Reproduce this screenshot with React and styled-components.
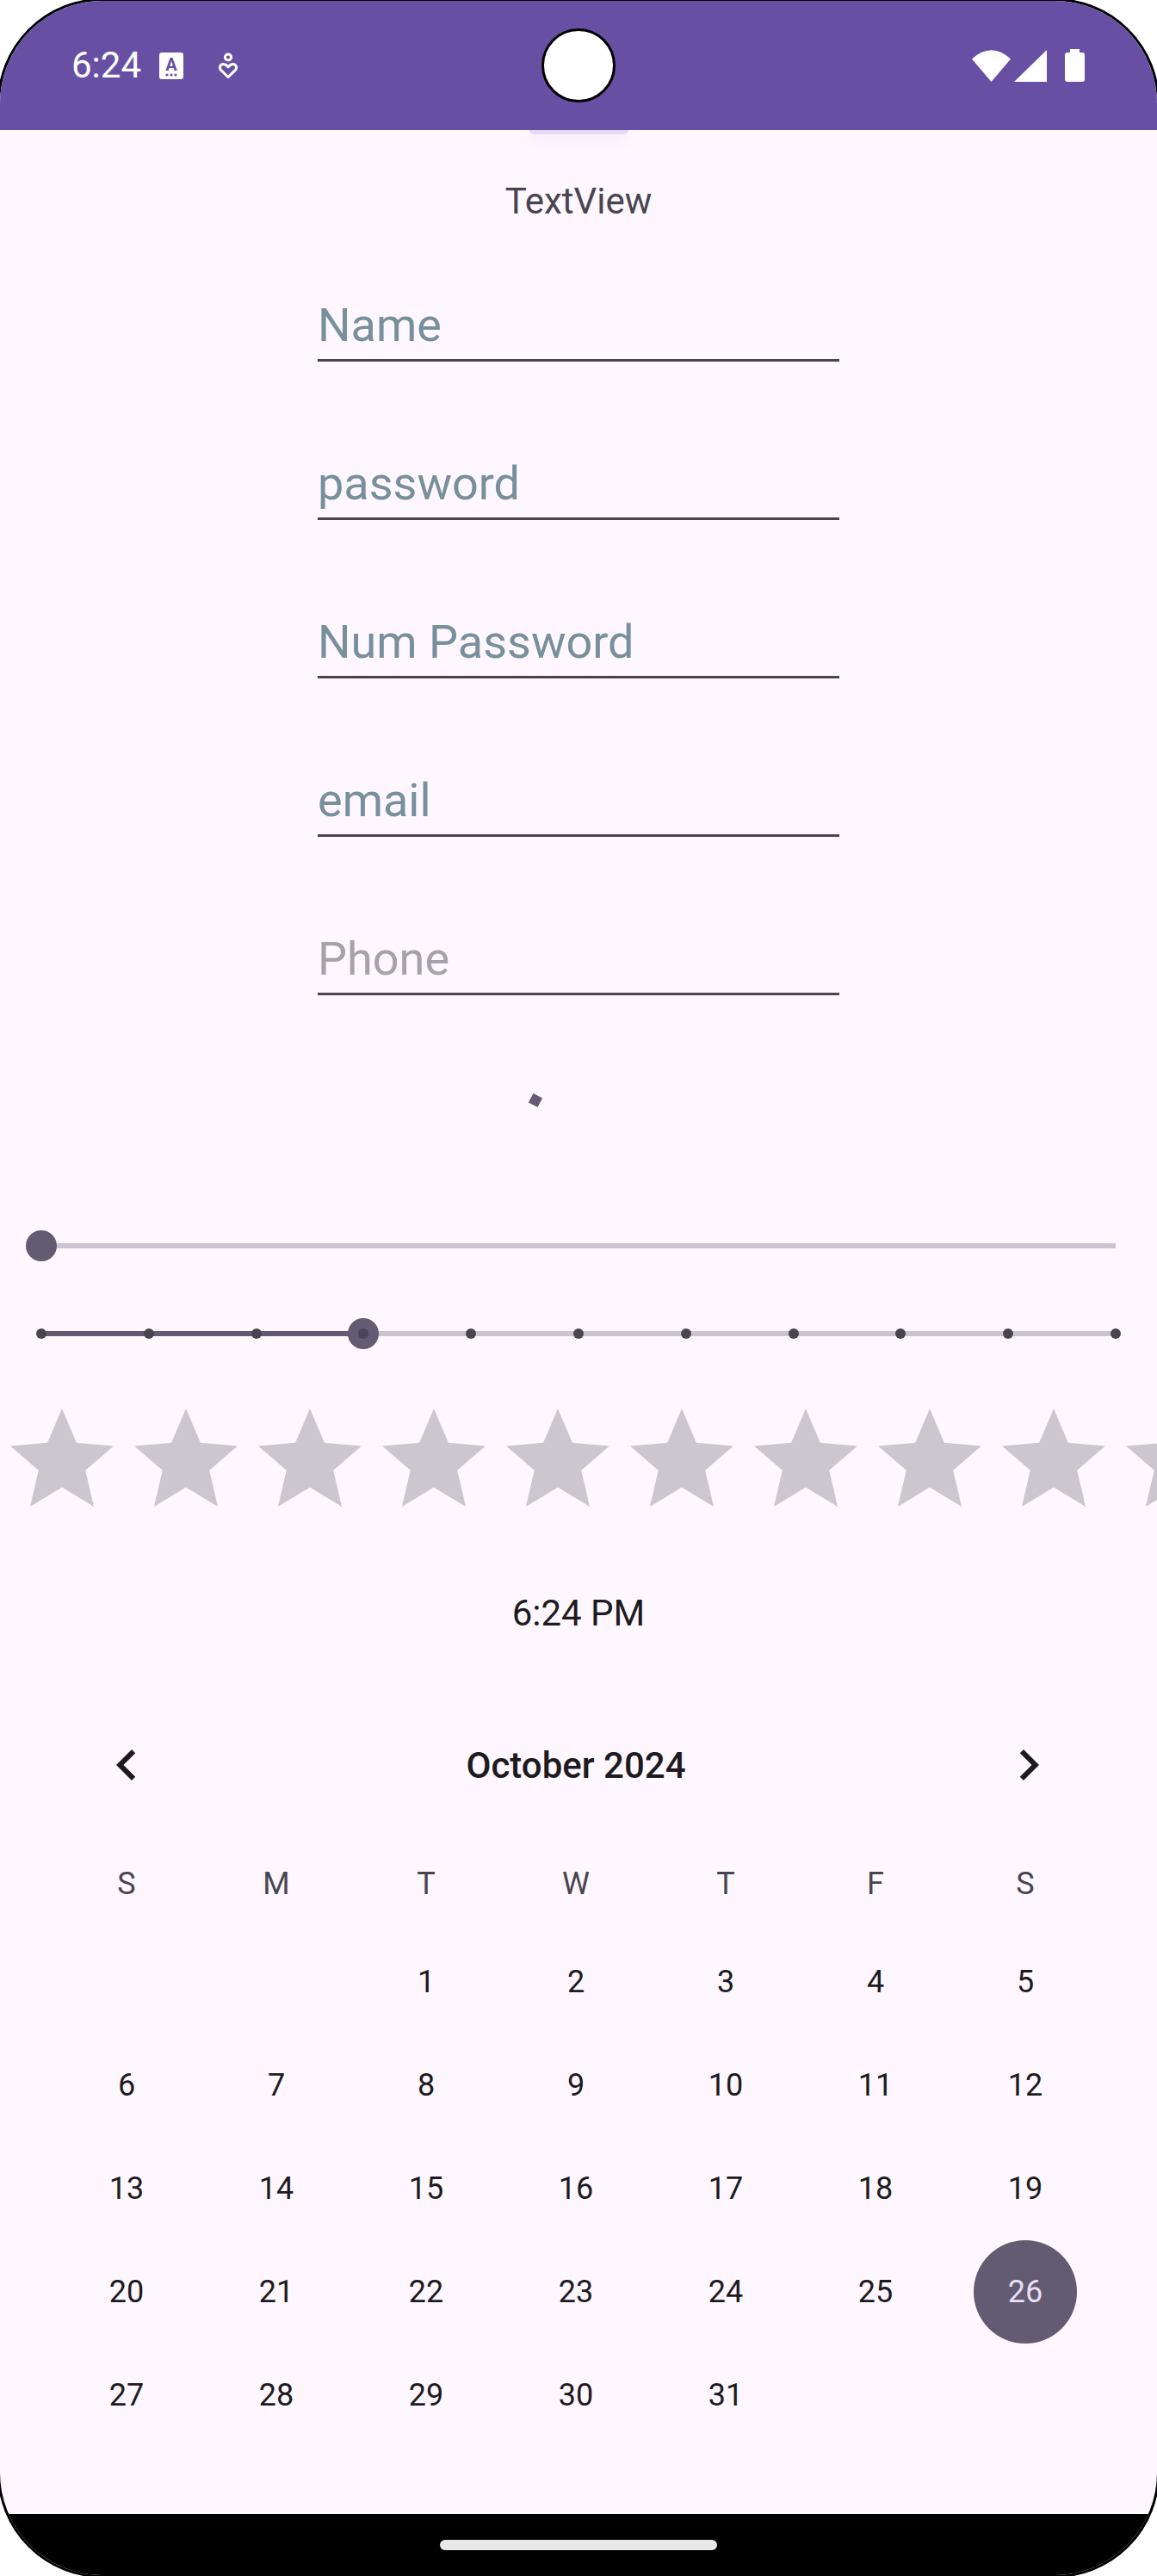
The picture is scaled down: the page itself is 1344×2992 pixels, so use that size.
import React from "react";
import styled, { createGlobalStyle } from "styled-components";

const GlobalStyle = createGlobalStyle`
  html, body {
    margin: 0;
    padding: 0;
    background: #fff;
  }
  body {
    font-family: Roboto, "Noto Sans", "Liberation Sans", sans-serif;
  }
  * {
    box-sizing: border-box;
  }
`;

const PageSt = styled.div`
  width: 1344px;
  height: 2992px;
  overflow: hidden;
  background: #fff;
`;

const ScreenSt = styled.div`
  margin: -2px -3px;
  width: 1350px;
  height: 2996px;
  border: 3px solid #000;
  border-radius: 122px;
  overflow: hidden;
  background: #fef7ff;
  display: flex;
  flex-direction: column;
`;

const StatusBarSt = styled.div`
  flex-shrink: 0;
  height: 150px;
  background: #6750a4;
  display: grid;
  grid-template-columns: 1fr auto 1fr;
  align-items: center;
  padding: 0 84px 0 83px;
  color: #fff;
`;

const StatusLeftSt = styled.div`
  display: flex;
  align-items: center;
`;

const ClockSt = styled.span`
  font-size: 42px;
  line-height: 42px;
  margin-right: 21px;
`;

const StatusRightSt = styled.div`
  justify-self: end;
  display: flex;
  align-items: center;
`;

const CameraSt = styled.div`
  width: 86px;
  height: 86px;
  border-radius: 50%;
  background: #fff;
  border: 3px solid #000;
`;

const TabHintSt = styled.div`
  flex-shrink: 0;
  width: 115px;
  height: 5px;
  margin: 0 auto;
  background: #e4d9f9;
  border-radius: 0 0 14px 14px;
  box-shadow: 0 6px 14px rgba(70, 50, 90, 0.09);
`;

const BodySt = styled.main`
  flex: 1;
  display: flex;
  flex-direction: column;
`;

const TextViewSt = styled.div`
  margin-top: ${(p) => p.$top}px;
  font-size: 42px;
  line-height: 49px;
  text-align: center;
  color: ${(p) => p.$color || "#49454f"};
`;

const FieldsSt = styled.div`
  margin-top: 88px;
  display: flex;
  flex-direction: column;
  align-items: center;
  gap: 110px;
`;

const FieldSt = styled.div`
  width: 606px;
  padding-bottom: 8px;
  border-bottom: 3px solid #49454f;
  font-size: 54px;
  line-height: 63px;
  color: ${(p) => p.$hint};
`;

const ProgressSt = styled.svg`
  display: block;
  margin: 50px auto 0;
`;

const SliderSt = styled.div`
  position: relative;
  height: 48px;
  margin: ${(p) => p.$top}px 48px 0;
  display: flex;
  align-items: center;
`;

const TrackSt = styled.div`
  position: relative;
  flex: 1;
  height: 6px;
  background: #cac4d0;
`;

const ActiveTrackSt = styled.div`
  position: absolute;
  left: 0;
  top: 0;
  bottom: 0;
  width: ${(p) => p.$pct}%;
  background: #625b71;
`;

const TicksSt = styled.div`
  position: absolute;
  left: -6px;
  right: -6px;
  top: 50%;
  transform: translateY(-50%);
  display: flex;
  justify-content: space-between;
`;

const TickSt = styled.span`
  width: 12px;
  height: 12px;
  border-radius: 50%;
  background: #49454f;
`;

const ThumbSt = styled.div`
  position: absolute;
  left: ${(p) => p.$pct}%;
  top: 50%;
  width: 36px;
  height: 36px;
  margin: -18px 0 0 -18px;
  border-radius: 50%;
  background: #625b71;
  display: flex;
  align-items: center;
  justify-content: center;
`;

const ThumbDotSt = styled.span`
  width: 12px;
  height: 12px;
  border-radius: 50%;
  background: #4a4458;
`;

const StarsSt = styled.div`
  margin-top: 51px;
  display: flex;
  overflow: hidden;
`;

const StarSt = styled.svg`
  flex-shrink: 0;
  display: block;
`;

const CalendarSt = styled.section`
  margin-top: 116px;
  padding: 0 60px;
`;

const CalHeaderSt = styled.div`
  display: grid;
  grid-template-columns: repeat(7, 174px);
  height: 72px;
  align-items: center;
`;

const NavButtonSt = styled.button`
  justify-self: center;
  width: 72px;
  height: 72px;
  padding: 0;
  border: none;
  background: none;
  display: flex;
  align-items: center;
  justify-content: center;
  margin-left: ${(p) => p.$shift || 0}px;
`;

const MonthTitleSt = styled.div`
  grid-column: 2 / 7;
  text-align: center;
  font-size: 42px;
  font-weight: 500;
  color: #1d1b20;
`;

const WeekRowSt = styled.div`
  margin-top: 50px;
  display: grid;
  grid-template-columns: repeat(7, 174px);
  height: 104px;
`;

const WeekDaySt = styled.div`
  display: flex;
  align-items: center;
  justify-content: center;
  font-size: 36px;
  color: #49454f;
`;

const DaysGridSt = styled.div`
  margin-top: 2px;
  display: grid;
  grid-template-columns: repeat(7, 174px);
  grid-auto-rows: 120px;
`;

const DayCellSt = styled.div`
  display: flex;
  align-items: center;
  justify-content: center;
`;

const DaySt = styled.span`
  width: 120px;
  height: 120px;
  border-radius: 50%;
  display: flex;
  align-items: center;
  justify-content: center;
  font-size: 36px;
  color: ${(p) => (p.$selected ? "#e8def8" : "#1d1b20")};
  background: ${(p) => (p.$selected ? "#625b71" : "transparent")};
`;

const NavBarSt = styled.div`
  flex-shrink: 0;
  height: 71px;
  background: #000;
  display: flex;
  justify-content: center;
  padding-top: 30px;
`;

const HomePillSt = styled.div`
  width: 322px;
  height: 12px;
  border-radius: 6px;
  background: #e8e8e8;
`;

function AccessIcon() {
  return (
    <svg width="28" height="31" viewBox="0 0 28 31" style={{ marginRight: 40 }}>
      <rect x="0" y="0" width="28" height="31" rx="3" fill="#fff" />
      <text
        x="14"
        y="21"
        textAnchor="middle"
        fontFamily="Roboto, sans-serif"
        fontWeight="700"
        fontSize="20"
        fill="#6750a4"
      >
        A
      </text>
      <circle cx="9" cy="26" r="1.6" fill="#6750a4" />
      <circle cx="14" cy="26" r="1.6" fill="#6750a4" />
      <circle cx="19" cy="26" r="1.6" fill="#6750a4" />
    </svg>
  );
}

function HeartPersonIcon() {
  return (
    <svg width="24" height="31" viewBox="0 0 24 31">
      <circle cx="12" cy="5.5" r="3.6" fill="none" stroke="#fff" strokeWidth="3" />
      <path
        d="M12 28.5 L3.8 20.6 C1.2 18 2.6 13.6 6.3 13.6 C8.6 13.6 10.6 15 12 16.8 C13.4 15 15.4 13.6 17.7 13.6 C21.4 13.6 22.8 18 20.2 20.6 Z"
        fill="none"
        stroke="#fff"
        strokeWidth="3"
        strokeLinejoin="round"
      />
    </svg>
  );
}

function WifiIcon() {
  return (
    <svg width="45" height="38" viewBox="0 0 45 38" style={{ marginRight: 4 }}>
      <path d="M22.5 38 L0 11.5 Q22.5 -9 45 11.5 Z" fill="#fff" />
    </svg>
  );
}

function SignalIcon() {
  return (
    <svg width="38" height="37" viewBox="0 0 38 37" style={{ marginRight: 21 }}>
      <path d="M0 37 L38 0 L38 37 Z" fill="#fff" />
    </svg>
  );
}

function BatteryIcon() {
  return (
    <svg width="23" height="38" viewBox="0 0 23 38">
      <rect x="6" y="0" width="11" height="5" fill="#fff" />
      <rect x="0" y="4" width="23" height="34" rx="3" fill="#fff" />
    </svg>
  );
}

function Star() {
  return (
    <StarSt width="144" height="144" viewBox="0 0 24 24">
      <path
        d="M12 17.27L18.18 21l-1.64-7.03L22 9.24l-7.19-.61L12 2 9.19 8.63 2 9.24l5.46 4.73L5.82 21z"
        fill="#ccc7ce"
      />
    </StarSt>
  );
}

function Chevron({ dir }) {
  const d =
    dir === "left"
      ? "M15.41 7.41L14 6l-6 6 6 6 1.41-1.41L10.83 12z"
      : "M10 6L8.59 7.41 13.17 12l-4.58 4.59L10 18l6-6z";
  return (
    <svg width="72" height="72" viewBox="0 0 24 24">
      <path d={d} fill="#1d1b20" />
    </svg>
  );
}

function Slider({ top, value, steps }) {
  const pct = steps ? (value / steps) * 100 : value;
  return (
    <SliderSt $top={top}>
      <TrackSt>
        <ActiveTrackSt $pct={pct} />
        {steps ? (
          <TicksSt>
            {Array.from({ length: steps + 1 }, (_, i) => (
              <TickSt key={i} />
            ))}
          </TicksSt>
        ) : null}
        <ThumbSt $pct={pct}>{steps ? <ThumbDotSt /> : null}</ThumbSt>
      </TrackSt>
    </SliderSt>
  );
}

const fields = [
  { label: "Name", hint: "#78909c" },
  { label: "password", hint: "#78909c" },
  { label: "Num Password", hint: "#78909c" },
  { label: "email", hint: "#78909c" },
  { label: "Phone", hint: "#a6a1aa" },
];

const weekDays = ["S", "M", "T", "W", "T", "F", "S"];

export default function App() {
  const cells = [null, null, ...Array.from({ length: 31 }, (_, i) => i + 1)];

  return (
    <PageSt>
      <GlobalStyle />
      <ScreenSt>
        <StatusBarSt>
          <StatusLeftSt>
            <ClockSt>6:24</ClockSt>
            <AccessIcon />
            <HeartPersonIcon />
          </StatusLeftSt>
          <CameraSt />
          <StatusRightSt>
            <WifiIcon />
            <SignalIcon />
            <BatteryIcon />
          </StatusRightSt>
        </StatusBarSt>

        <TabHintSt />

        <BodySt>
          <TextViewSt $top={53}>TextView</TextViewSt>

          <FieldsSt>
            {fields.map((f) => (
              <FieldSt key={f.label} $hint={f.hint}>
                {f.label}
              </FieldSt>
            ))}
          </FieldsSt>

          <ProgressSt width="144" height="144" viewBox="0 0 144 144">
            <rect
              x="16"
              y="66"
              width="12"
              height="12"
              fill="#625b71"
              transform="rotate(28 22 72)"
            />
          </ProgressSt>

          <Slider top={73} value={0} />
          <Slider top={54} value={3} steps={10} />

          <StarsSt>
            {Array.from({ length: 10 }, (_, i) => (
              <Star key={i} />
            ))}
          </StarsSt>

          <TextViewSt $top={81} $color="#1d1b20">
            6:24 PM
          </TextViewSt>

          <CalendarSt>
            <CalHeaderSt>
              <NavButtonSt>
                <Chevron dir="left" />
              </NavButtonSt>
              <MonthTitleSt>October 2024</MonthTitleSt>
              <NavButtonSt $shift={8}>
                <Chevron dir="right" />
              </NavButtonSt>
            </CalHeaderSt>

            <WeekRowSt>
              {weekDays.map((d, i) => (
                <WeekDaySt key={i}>{d}</WeekDaySt>
              ))}
            </WeekRowSt>

            <DaysGridSt>
              {cells.map((n, i) => (
                <DayCellSt key={i}>
                  {n ? <DaySt $selected={n === 26}>{n}</DaySt> : null}
                </DayCellSt>
              ))}
            </DaysGridSt>
          </CalendarSt>
        </BodySt>

        <NavBarSt>
          <HomePillSt />
        </NavBarSt>
      </ScreenSt>
    </PageSt>
  );
}
